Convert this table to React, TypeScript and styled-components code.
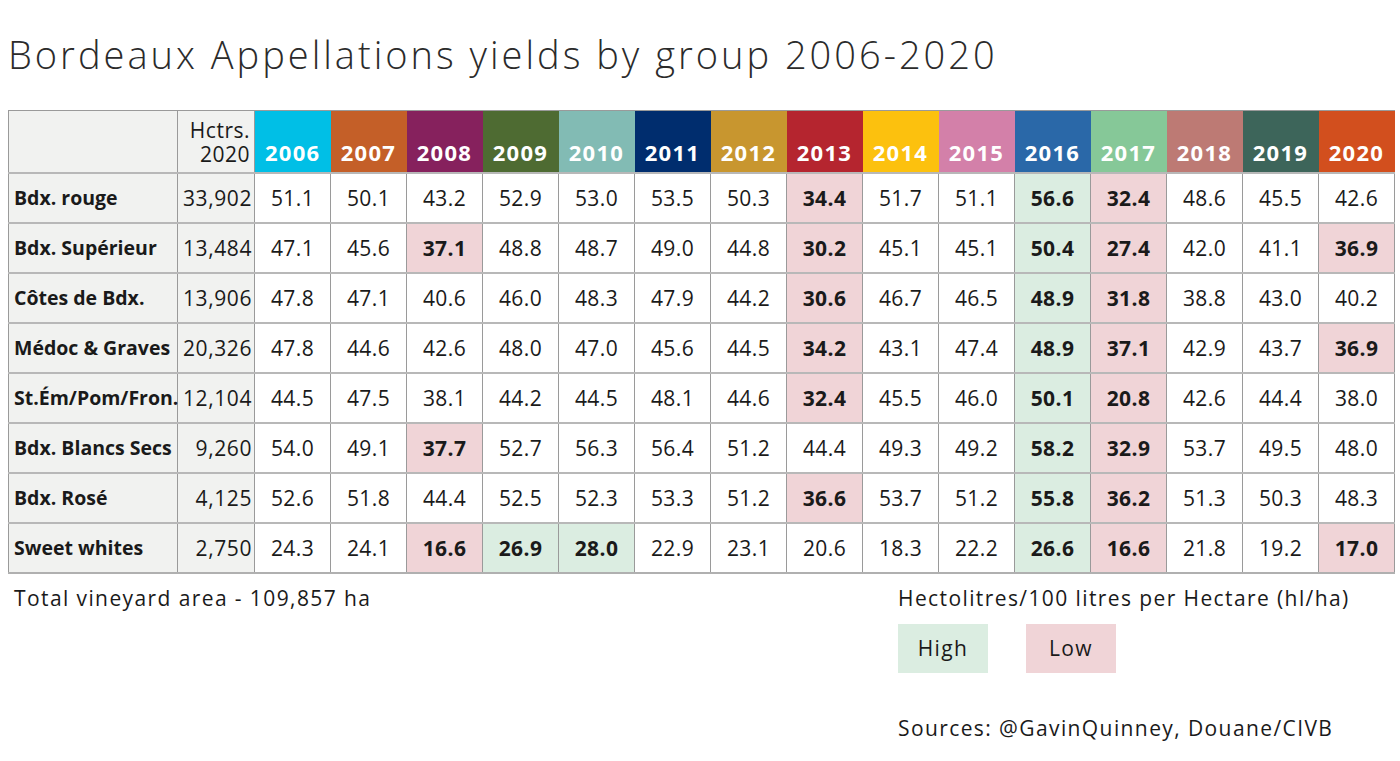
import styled, { createGlobalStyle } from 'styled-components';

const GlobalStyle = createGlobalStyle`
  body {
    margin: 0;
    background: #ffffff;
    font-family: 'Open Sans', 'Noto Sans', sans-serif;
    color: #1a1a1a;
  }
`;

const Page = styled.div`
  width: 1400px;
  height: 761px;
  padding: 0 5px 0 8px;
  box-sizing: border-box;
  background: #fff;
`;

const Title = styled.h1`
  margin: 0;
  height: 110px;
  display: flex;
  align-items: center;
  font-size: 38px;
  font-weight: 300;
  color: #2b2b2b;
  letter-spacing: 3px;
  padding-bottom: 2px;
  box-sizing: border-box;
`;

const Table = styled.table`
  border-collapse: collapse;
  table-layout: fixed;
  width: 1387px;
  border-top: 1px solid #9a9a9a;
  border-bottom: 2px solid #b0b0b0;
`;

const HeadCell = styled.th<{ $bg: string }>`
  height: 62px;
  padding: 0 0 5px;
  box-sizing: border-box;
  vertical-align: bottom;
  background: ${(p) => p.$bg};
  color: #fff;
  font-size: 22px;
  font-weight: 700;
  letter-spacing: 1.3px;
  text-align: center;
`;

const CornerCell = styled.th`
  background: #f1f2f0;
  border-left: 1px solid #9a9a9a;
  border-right: 1px solid #9a9a9a;
`;

const HctrsHead = styled.th`
  background: #f1f2f0;
  border-right: 1px solid #9a9a9a;
  vertical-align: bottom;
  text-align: right;
  padding: 0 4px 6px 0;
  font-size: 21px;
  font-weight: 400;
  line-height: 24px;
  letter-spacing: 0.5px;
  color: #1a1a1a;
`;

const Row = styled.tr`
  height: 50px;
  border-top: 2px solid #b8b8b8;
`;

const Label = styled.td`
  background: #f1f2f0;
  border-left: 1px solid #9a9a9a;
  border-right: 1px solid #9a9a9a;
  padding: 0 0 0 5px;
  font-size: 19.5px;
  font-weight: 700;
  white-space: nowrap;
  letter-spacing: 0;
`;

const Area = styled.td`
  background: #f1f2f0;
  border-right: 1px solid #9a9a9a;
  text-align: right;
  padding: 0 2px 0 0;
  font-size: 21px;
  letter-spacing: 0.6px;
`;

const Value = styled.td<{ $mark?: 'H' | 'L' }>`
  border-right: 1px solid #9a9a9a;
  text-align: center;
  font-size: 21px;
  letter-spacing: 0.4px;
  font-weight: ${(p) => (p.$mark ? 700 : 400)};
  background: ${(p) =>
    p.$mark === 'H' ? '#dbede1' : p.$mark === 'L' ? '#f0d4d7' : '#fff'};
`;

const Footer = styled.div`
  display: flex;
  justify-content: space-between;
  padding-top: 10px;
  font-size: 21px;
  letter-spacing: 1.4px;
`;

const Note = styled.div`
  padding-left: 6px;
`;

const Legend = styled.div`
  width: 497px;
  display: flex;
  flex-direction: column;
`;

const Swatches = styled.div`
  display: flex;
  gap: 38px;
  margin-top: 12px;
`;

const Swatch = styled.div<{ $bg: string }>`
  width: 90px;
  height: 49px;
  display: flex;
  align-items: center;
  justify-content: center;
  background: ${(p) => p.$bg};
`;

const Sources = styled.div`
  margin-top: 41px;
`;

const years = [
  ['2006', '#00bfe6'],
  ['2007', '#c45f28'],
  ['2008', '#86215d'],
  ['2009', '#4e6b32'],
  ['2010', '#82bbb4'],
  ['2011', '#002d6e'],
  ['2012', '#c8962f'],
  ['2013', '#b5252f'],
  ['2014', '#fcc10e'],
  ['2015', '#d380a9'],
  ['2016', '#2a68a8'],
  ['2017', '#86c898'],
  ['2018', '#bd7a74'],
  ['2019', '#3d655a'],
  ['2020', '#d24f1e'],
];

// values with H/L suffix get a highlight
const rows: [string, string, string][] = [
  ['Bdx. rouge', '33,902', '51.1 50.1 43.2 52.9 53.0 53.5 50.3 34.4L 51.7 51.1 56.6H 32.4L 48.6 45.5 42.6'],
  ['Bdx. Supérieur', '13,484', '47.1 45.6 37.1L 48.8 48.7 49.0 44.8 30.2L 45.1 45.1 50.4H 27.4L 42.0 41.1 36.9L'],
  ['Côtes de Bdx.', '13,906', '47.8 47.1 40.6 46.0 48.3 47.9 44.2 30.6L 46.7 46.5 48.9H 31.8L 38.8 43.0 40.2'],
  ['Médoc & Graves', '20,326', '47.8 44.6 42.6 48.0 47.0 45.6 44.5 34.2L 43.1 47.4 48.9H 37.1L 42.9 43.7 36.9L'],
  ['St.Ém/Pom/Fron.', '12,104', '44.5 47.5 38.1 44.2 44.5 48.1 44.6 32.4L 45.5 46.0 50.1H 20.8L 42.6 44.4 38.0'],
  ['Bdx. Blancs Secs', '9,260', '54.0 49.1 37.7L 52.7 56.3 56.4 51.2 44.4 49.3 49.2 58.2H 32.9L 53.7 49.5 48.0'],
  ['Bdx. Rosé', '4,125', '52.6 51.8 44.4 52.5 52.3 53.3 51.2 36.6L 53.7 51.2 55.8H 36.2L 51.3 50.3 48.3'],
  ['Sweet whites', '2,750', '24.3 24.1 16.6L 26.9H 28.0H 22.9 23.1 20.6 18.3 22.2 26.6H 16.6L 21.8 19.2 17.0L'],
];

const App = () => {
  return (
    <>
      <GlobalStyle />
      <Page>
        <Title>Bordeaux Appellations yields by group 2006-2020</Title>
        <Table>
          <colgroup>
            <col style={{ width: 169 }} />
            <col style={{ width: 77 }} />
            {years.map(([y]) => (
              <col key={y} />
            ))}
          </colgroup>
          <thead>
            <tr>
              <CornerCell />
              <HctrsHead>
                Hctrs.
                <br />
                2020
              </HctrsHead>
              {years.map(([y, c]) => (
                <HeadCell key={y} $bg={c}>
                  {y}
                </HeadCell>
              ))}
            </tr>
          </thead>
          <tbody>
            {rows.map(([name, area, vals]) => (
              <Row key={name}>
                <Label>{name}</Label>
                <Area>{area}</Area>
                {vals.split(' ').map((v, i) => {
                  const last = v.slice(-1);
                  const mark = last === 'H' || last === 'L' ? last : undefined;
                  return (
                    <Value key={i} $mark={mark}>
                      {mark ? v.slice(0, -1) : v}
                    </Value>
                  );
                })}
              </Row>
            ))}
          </tbody>
        </Table>
        <Footer>
          <Note>Total vineyard area - 109,857 ha</Note>
          <Legend>
            <div>Hectolitres/100 litres per Hectare (hl/ha)</div>
            <Swatches>
              <Swatch $bg="#dbede1">High</Swatch>
              <Swatch $bg="#f0d4d7">Low</Swatch>
            </Swatches>
            <Sources>Sources: @GavinQuinney, Douane/CIVB</Sources>
          </Legend>
        </Footer>
      </Page>
    </>
  );
};

export default App;
